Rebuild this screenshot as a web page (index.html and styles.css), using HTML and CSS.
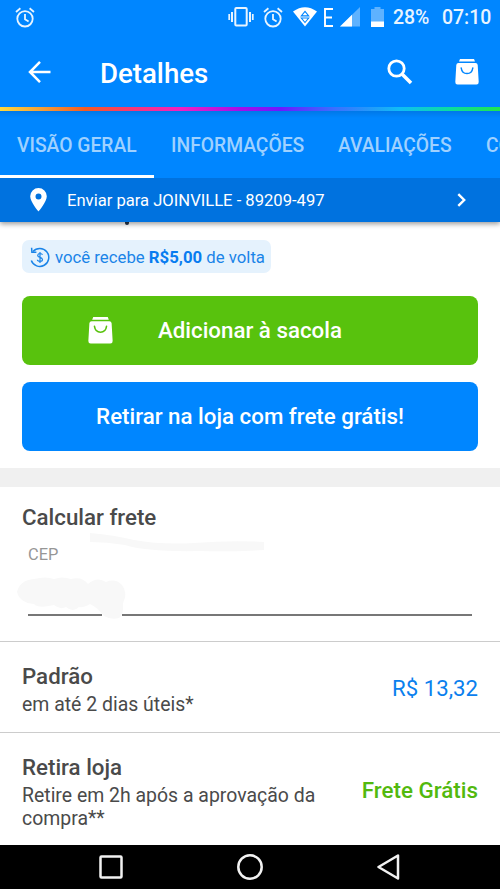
FILE: index.html
```html
<!DOCTYPE html>
<html lang="pt-BR">
<head>
<meta charset="utf-8">
<title>Detalhes</title>
<link rel="stylesheet" href="styles.css">
</head>
<body>
<svg class="defs" width="0" height="0" aria-hidden="true">
  <symbol id="alarm" viewBox="0 0 20 21">
    <circle cx="10" cy="11.8" r="7.7" fill="none" stroke="currentColor" stroke-width="1.8"/>
    <path d="M10 7v5.2l3.6 2.3M1 5l4.4-3.7M19 5l-4.4-3.7" fill="none" stroke="currentColor" stroke-width="1.8"/>
  </symbol>
  <symbol id="bag" viewBox="0 0 24 26">
    <path d="M5 0h14l1 2.600H4z M3.500 4h17q2 0 2.200 2l1 17q0 2.500-2.200 2.500h-19Q.3 25.500.3 23l1-17q.2-2 2.200-2z" fill="#fff"/>
    <path d="M6.200 9q.8 5.600 5.800 5.600T17.800 9" fill="none" stroke="currentColor" stroke-width="1.500" stroke-linecap="round"/>
  </symbol>
</svg>
<div class="screen">
  <header class="top">
    <div class="status">
      <svg class="alarm-left" width="20" height="21"><use href="#alarm"/></svg>
      <svg class="vibrate" width="26" height="20" viewBox="0 0 26 20" fill="none" stroke="#e8f4ff"><rect x="7.300" y="1" width="11.400" height="17.600" rx="1" stroke-width="2"/><path d="M4 5v10M22 5v10" stroke-width="2"/><path d="M1.200 7v6M24.800 7v6" stroke-width="1.700"/></svg>
      <svg class="alarm-right" width="20" height="21"><use href="#alarm"/></svg>
      <svg class="wifi" width="24" height="20" viewBox="0 0 24 20"><path d="M0 4.500Q12-4 24 4.500L12 19.500z" fill="#fff"/><path d="M12 4.300l3.700 4.600H8.300zM8.300 11h7.400L12 15.500z" fill="#fff" stroke="#0086ff" stroke-width="1.100"/></svg>
      <svg class="edge" width="9" height="19" viewBox="0 0 9 19"><path d="M9 1H1v17h8M1 9.500h7" fill="none" stroke="#fff" stroke-width="1.900"/></svg>
      <svg class="signal" width="20" height="20" viewBox="0 0 20 20"><path d="M20 0v19.500H0z" fill="#5eb2ff"/><path d="M12 7.800v11.700H0z" fill="#fff"/></svg>
      <svg class="battery" width="13" height="20" viewBox="0 0 13 20"><path d="M3.500 0h6v2H13v18H0V2h3.500z" fill="#5eb2ff"/><path d="M0 14.500h13V20H0z" fill="#fff"/></svg>
      <span class="percent">28%</span>
      <span class="clock">07:10</span>
    </div>
    <div class="appbar">
      <svg class="back" width="24" height="22" viewBox="0 0 24 22" fill="none" stroke="#fff" stroke-width="2.500"><path d="M12 .9L2 11l10 10.100M2 11h20.500"/></svg>
      <h1>Detalhes</h1>
      <svg class="search" width="26" height="26" viewBox="0 0 26 26" fill="none" stroke="#fff"><circle cx="9.500" cy="9.500" r="7.700" stroke-width="2.800"/><path d="M15 15l9 9" stroke-width="3.500"/></svg>
      <svg class="cart" width="24" height="26"><use href="#bag"/></svg>
    </div>
    <div class="rainbow"></div>
    <nav class="tabs">
      <span class="tab tab-active">VISÃO GERAL</span>
      <span class="tab tab-info">INFORMAÇÕES</span>
      <span class="tab tab-reviews">AVALIAÇÕES</span>
      <span class="tab tab-more">CO</span>
    </nav>
    <div class="location">
      <svg class="pin" width="17" height="24" viewBox="0 0 17 24"><path fill-rule="evenodd" d="M8.500 0A8.300 8.300 0 0 0 .2 8.300C.2 14 8.500 23.500 8.500 23.500S16.800 14 16.800 8.300A8.300 8.300 0 0 0 8.500 0zm0 5.400a3 3 0 1 1 0 6 3 3 0 0 1 0-6z" fill="#fff"/></svg>
      <span class="send">Enviar para JOINVILLE - 89209-497</span>
      <svg class="chevron" width="9" height="14" viewBox="0 0 9 14"><path d="M1.300 1.200L7.200 7l-5.900 5.800" fill="none" stroke="#fff" stroke-width="2.400"/></svg>
    </div>
  </header>
  <main>
    <section class="buy">
      <div class="scrolled"></div>
      <div class="cashback">
        <svg width="20" height="21" viewBox="0 0 20 21" fill="none" stroke="#1a84e8"><path d="M3 4.500A9 9 0 1 1 1.300 13.500" stroke-width="1.500"/><path d="M1.600.8l.3 4.500 4.500-.1" stroke-width="1.500"/><path d="M12.500 7.800Q12 6.500 10 6.500T7.700 8.400Q7.700 9.800 10 10.300t2.500 2.200q0 1.900-2.500 1.900t-2.600-1.600M10 5v11" stroke-width="1.200"/></svg>
        <span class="cash-text">você recebe <b>R$5,00</b> de volta</span>
      </div>
      <div class="button add"><svg width="25" height="27"><use href="#bag"/></svg><span class="add-label">Adicionar à sacola</span></div>
      <div class="button pickup"><span class="pickup-label">Retirar na loja com frete grátis!</span></div>
    </section>
    <section class="freight">
      <h2 class="freight-title">Calcular frete</h2>
      <label class="cep">CEP</label>
      <div class="field"><i></i><i></i></div>
      <svg class="smudges" width="290" height="110" viewBox="0 525 290 110" fill="#f8f8f8"><path d="M90 533q24 2 44 7 28 5 60 3 38-3 70-1v8q-35 2-65 1-52 1-74-6-18-3-35-3z"/><path d="M17 592q3-12 17-13 12-3 20 0 8-3 17 0 11-3 17 5 9-8 18-2 9-4 16 3 6 8 1 18 1 12-4 15-8 2-15-2-7-9-14-12-7 4-11 3-6 6-13 0-6 3-12-2-16 4-20-1-14-1-17-12z"/></svg>
    </section>
    <section class="option standard">
      <div class="desc"><h2 class="pad-title">Padrão</h2><p class="pad-text">em até 2 dias úteis*</p></div>
      <span class="price">R$ 13,32</span>
    </section>
    <section class="option store">
      <div class="desc"><h2 class="store-title">Retira loja</h2><p><span class="store-text">Retire em 2h após a aprovação da</span><br>compra**</p></div>
      <span class="free">Frete Grátis</span>
    </section>
  </main>
  <footer class="softkeys">
    <svg width="24" height="24" viewBox="0 0 24 24"><rect x="1.500" y="1.500" width="21" height="21" rx="1"/></svg>
    <svg width="26" height="26" viewBox="0 0 26 26"><circle cx="13" cy="13" r="11.700"/></svg>
    <svg width="23" height="26" viewBox="0 0 23 26"><path d="M21 1.500v23L1.500 13z"/></svg>
  </footer>
</div>
</body>
</html>
```
FILE: styles.css
```css
* { box-sizing: border-box; }
body { margin: 0; font-family: Roboto, sans-serif; color: #4a4a4a; background: #fff; }
svg { display: block; flex: none; }
h1, h2, p { margin: 0; }
h1, h2 { font-weight: 500; }
span, h1, h2, p { white-space: nowrap; }
.defs { position: absolute; }
.screen { width: 500px; height: 889px; overflow: hidden; display: flex; flex-direction: column; }
.top { height: 222px; flex: none; position: relative; z-index: 1; background: #0086ff; color: #fff; box-shadow: 0 2px 5px rgba(0,0,0,.4); }
.status { height: 34px; display: flex; align-items: center; padding-left: 15px; color: #e8f4ff; }
.vibrate { margin-left: 193px; }
.alarm-right { margin-left: 9px; }
.wifi { margin-left: 10px; }
.edge { margin-left: 7px; }
.signal { margin-left: 7px; }
.battery { margin-left: 11px; }
.percent { margin-left: 9px; width: 49px; font-size: 19.44px; font-weight: 500; }
.clock { font-size: 19.44px; font-weight: 500; }
.appbar { height: 73px; display: flex; align-items: center; padding: 2px 0 0 28px; color: #0086ff; }
h1 { color: #fff; font-size: 27.600px; line-height: 34px; width: 287px; margin-left: 48px; padding-top: 4px; }
.cart { margin-left: 42px; }
.rainbow { height: 4px; background: linear-gradient(90deg, #ffd83d 0, #f3a13a 8%, #f45b21 17%, #f93b68 25%, #f51fc0 36%, #a60ee8 48%, #6d18ff 56%, #3b70ff 67%, #10bdf5 80%, #0bdda0 90%, #20e64d 100%); }
.tabs { height: 67px; display: flex; overflow: hidden; background: linear-gradient(#0078e8, #0086ff 7px); color: #9fd1ff; font-size: 19.3px; font-weight: 500; line-height: 70px; }
.tab { flex: none; }
.tab-active { width: 154px; height: 67px; padding-left: 17px; border-bottom: 3px solid #fff; }
.tab-info { margin-left: 17px; width: 167px; }
.tab-reviews { width: 148px; }
.location { height: 44px; background: #0072df; display: flex; align-items: center; padding-left: 30px; font-size: 16.6px; }
.send { width: 390px; margin-left: 20px; padding-top: 1px; }
.buy { height: 246px; padding: 0 22px; }
.scrolled { width: 4px; height: 3px; margin-left: 103px; background: #25354a; border-radius: 0 0 3px 3px; }
.cashback { margin-top: 15px; width: 249px; height: 33px; border-radius: 7px; background: #e5f2fd; color: #1a84e8; display: flex; align-items: center; padding: 1px 0 0 8px; gap: 5px; font-size: 16.75px; }
.cashback b { color: #087cf0; }
.button { height: 69px; border-radius: 8px; color: #fff; font-size: 22.3px; font-weight: 500; display: flex; align-items: center; }
.add { margin-top: 22.5px; background: #58c20d; padding-left: 66px; gap: 45px; }
.add svg { color: #58c20d; }
.pickup { margin-top: 17px; background: #0086ff; justify-content: center; }
.freight { height: 174px; border-top: 19px solid #f0f0f0; border-bottom: 1px solid #ccc; padding: 17px 28px 0; position: relative; }
h2 { font-size: 22.3px; line-height: 26px; }
.freight-title { margin-left: -6px; }
.cep { display: block; margin-top: 15px; height: 20px; line-height: 20px; font-size: 16.4px; color: #969696; }
.field { margin-top: 49px; display: flex; gap: 20px; }
.field i { height: 1.500px; background: #777; width: 74px; }
.field i + i { flex: 1; }
.smudges { position: absolute; left: 0; top: 38px; z-index: -1; }
.option { display: flex; justify-content: space-between; padding: 0 22px; }
.standard { height: 91px; border-bottom: 1px solid #ccc; padding-top: 21px; }
.store { height: 112px; padding-top: 21px; }
.option p { font-size: 19.44px; line-height: 23px; margin-top: 4px; }
.price, .free { font-size: 22.2px; line-height: 26px; margin-top: 12px; color: #0a80ee; }
.free { color: #52b90e; font-weight: 500; font-size: 22.4px; margin-top: 23px; }
.softkeys { flex: 1; background: #000; display: flex; align-items: center; padding-left: 99px; }
.softkeys svg { fill: none; stroke: #f2f2f2; stroke-width: 2.500; stroke-linejoin: round; }
.softkeys svg + svg { margin-left: 114px; }
```
